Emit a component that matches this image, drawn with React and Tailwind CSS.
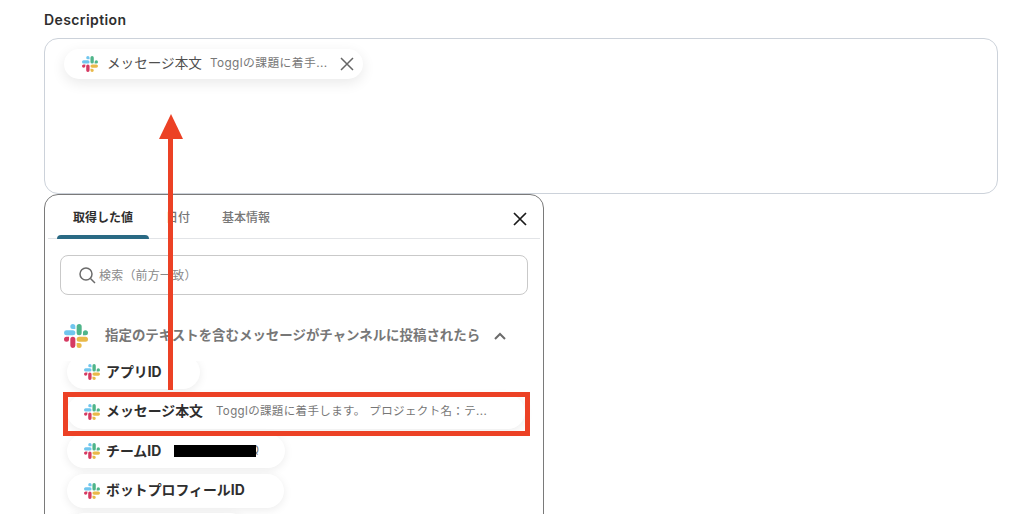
const fontStack = { fontFamily: '"Inter", "Noto Sans CJK JP", sans-serif' };

const SlackLogo = ({ size = 16 }) => (
  <svg width={size} height={size} viewBox="0 0 122.8 122.8" className="shrink-0">
    <path d="M25.8 77.6a12.9 12.9 0 1 1-12.9-12.9h12.9v12.9zm6.5 0a12.9 12.9 0 0 1 25.8 0v32.3a12.9 12.9 0 1 1-25.8 0V77.6z" fill="#d63a62" />
    <path d="M45.2 25.8a12.9 12.9 0 1 1 12.9-12.9v12.9H45.2zm0 6.5a12.9 12.9 0 0 1 0 25.8H12.9a12.9 12.9 0 1 1 0-25.8h32.3z" fill="#70c6ee" />
    <path d="M97 45.2a12.9 12.9 0 1 1 12.9 12.9H97V45.2zm-6.5 0a12.9 12.9 0 0 1-25.8 0V12.9a12.9 12.9 0 1 1 25.8 0v32.3z" fill="#4fb58a" />
    <path d="M77.6 97a12.9 12.9 0 1 1-12.9 12.9V97h12.9zm0-6.5a12.9 12.9 0 0 1 0-25.8h32.3a12.9 12.9 0 1 1 0 25.8H77.6z" fill="#e9b949" />
  </svg>
);

const CloseIcon = ({ size, color, width }) => (
  <svg width={size} height={size} viewBox="0 0 16 16" fill="none" stroke={color} strokeWidth={width} className="shrink-0">
    <path d="M2 2l12 12M14 2L2 14" />
  </svg>
);

const Chip = ({ name, value, widthClass, children }) => (
  <div className={`flex h-[34px] shrink-0 items-center rounded-full bg-white pl-[17px] shadow-[0_2px_10px_rgba(0,0,0,0.08)] ${widthClass}`}>
    <SlackLogo />
    <span className="ml-[6px] pt-[1px] text-[13.9px] leading-none font-bold whitespace-nowrap text-[#2e2e2e]">{name}</span>
    {value && <span className="ml-[13px] pt-[1px] text-[11.5px] leading-none tracking-[0.37px] whitespace-nowrap text-[#777777]">{value}</span>}
    {children}
  </div>
);

export default function App() {
  return (
    <div className="relative h-[514px] w-[1016px] overflow-hidden bg-white pt-[11px] pl-[44px]" style={fontStack}>
      <div className="text-[14px] leading-[18px] font-semibold tracking-[0.4px] text-[#2e2e2e]">Description</div>

      {/* 入力欄 */}
      <div className="mt-[9px] h-[156px] w-[954px] rounded-[14px] border border-[#ccd2da] bg-white pt-[10px] pl-[19px]">
        <div className="flex h-[30px] w-[299px] items-center rounded-full bg-white pl-[18px] shadow-[0_4px_14px_rgba(0,0,0,0.09)]">
          <SlackLogo />
          <span className="ml-[9px] text-[13.6px] leading-none whitespace-nowrap text-[#4f4f4f]">メッセージ本文</span>
          <span className="ml-[8px] text-[11.8px] leading-none tracking-[0.4px] whitespace-nowrap text-[#777777]">Togglの課題に着手...</span>
          <span className="ml-[11px]"><CloseIcon size={16} color="#666666" width={1.5} /></span>
        </div>
      </div>

      {/* 取得した値パネル */}
      <div className="h-[340px] w-[500px] rounded-t-[14px] border border-[#7a7a7a] bg-white">
        <div className="relative mx-[3px] flex h-[44px] items-center border-b border-[#e2e4e7] pt-[2px] pl-[25px]">
          <span className="text-[12px] font-bold text-[#2e2e2e]">取得した値</span>
          <span className="ml-[33px] text-[12px] font-medium text-[#777777]">日付</span>
          <span className="ml-[32px] text-[12px] font-medium text-[#777777]">基本情報</span>
          <div className="absolute bottom-[-1px] left-[9px] h-[4px] w-[92px] rounded-t-[4px] bg-[#2a6a84]"></div>
          <span className="absolute top-[16px] right-[12px]"><CloseIcon size={16} color="#1a1a1a" width={1.7} /></span>
        </div>

        <div className="mx-[15px] mt-[16px] flex h-[40px] w-[468px] items-center rounded-[8px] border border-[#c9c9c9] pl-[17px]">
          <svg width="18" height="18" viewBox="0 0 18 18" fill="none" stroke="#6b6b6b" strokeWidth="1.5" className="shrink-0">
            <circle cx="8" cy="8" r="6" />
            <path d="M12.5 12.5L17 17" />
          </svg>
          <span className="ml-[3px] pt-[2px] text-[12px] tracking-[0.2px] text-[#8a8a8a]">検索（前方一致）</span>
        </div>

        <div className="mt-[29px] flex items-center pl-[19px]">
          <SlackLogo size={24} />
          <span className="ml-[17px] text-[13.45px] leading-none font-bold whitespace-nowrap text-[#777777]">指定のテキストを含むメッセージがチャンネルに投稿されたら</span>
          <svg width="12" height="8" viewBox="0 0 12 8" fill="none" stroke="#6b6b6b" strokeWidth="2" className="ml-[14px] shrink-0">
            <path d="M1 7l5-5 5 5" />
          </svg>
        </div>

        {/* 値の一覧 */}
        <div className="mt-[13px] h-[153px] overflow-hidden pl-[22px]">
          <div className="mt-[-6px] flex flex-col gap-[5.5px]">
            <Chip name="アプリID" widthClass="w-[133px]" />
            <Chip name="メッセージ本文" value="Togglの課題に着手します。 プロジェクト名：テ..." widthClass="w-[458px]" />
            <Chip name="チームID" widthClass="w-[218px]">
              <span className="relative z-10 ml-[13px] h-[12px] w-[82px] bg-black"></span>
              <span className="ml-[-6px] text-[11.5px] leading-none text-[#777777]">Q</span>
            </Chip>
            <Chip name="ボットプロフィールID" widthClass="w-[217px]" />
            <Chip name="" widthClass="w-[180px]" />
          </div>
        </div>
      </div>

      {/* 注釈 */}
      <div className="absolute top-[135px] left-[168px] h-[255px] w-[5px] bg-[#ec4125]"></div>
      <svg width="26" height="26" viewBox="0 0 26 26" className="absolute top-[114px] left-[158px]">
        <path d="M13 0L25 25H1z" fill="#ec4125" />
      </svg>
      <div className="absolute top-[392px] left-[63px] h-[44px] w-[467px] border-[5px] border-[#ec4125]"></div>
    </div>
  );
}
